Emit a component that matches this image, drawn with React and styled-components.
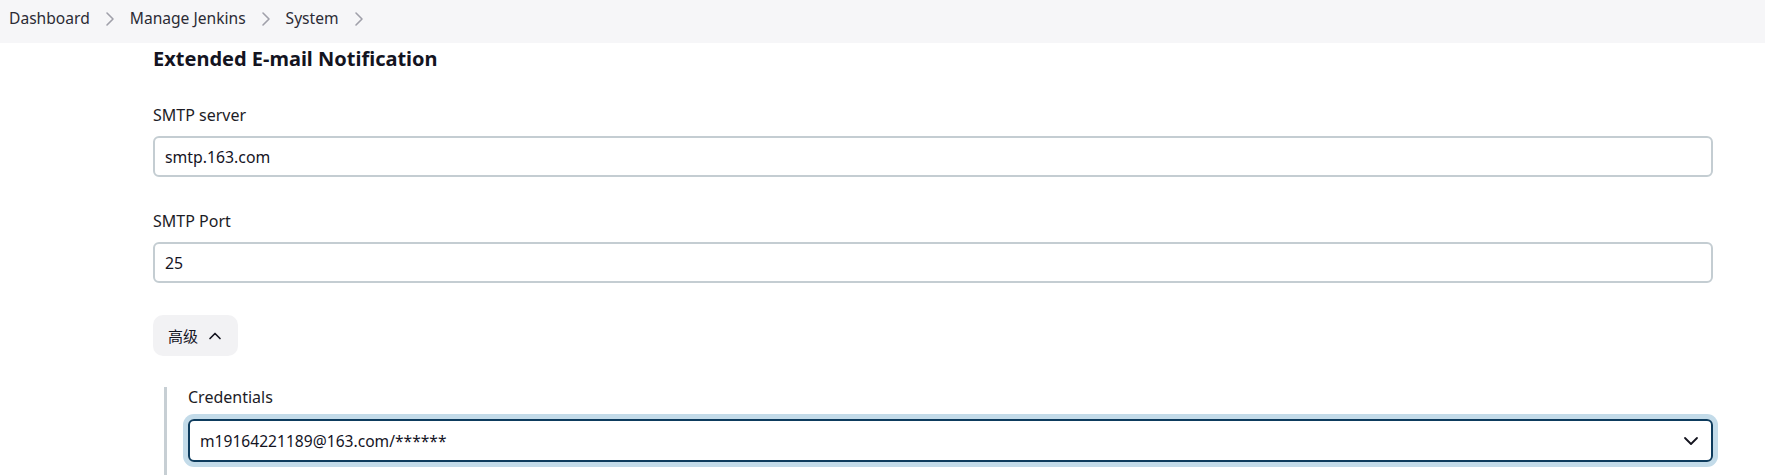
import React from 'react';
import styled, { createGlobalStyle } from 'styled-components';

const GlobalStyle = createGlobalStyle`
  html, body {
    margin: 0;
    padding: 0;
    background: #fff;
  }
  body {
    font-family: "Noto Sans", "Noto Sans CJK SC", sans-serif;
    color: #14141f;
  }
`

const Breadcrumbs = styled.nav`
  box-sizing: border-box;
  height: 43px;
  background: #f6f6f8;
  display: flex;
  align-items: center;
  padding: 0 0 8px 9px;
  font-size: 15.6px;
`

const Crumb = styled.span`
  color: #2b2b35;
  line-height: 20px;
`

const CrumbSep = styled.svg`
  width: 24px;
  height: 24px;
  margin: 2px 8px 0;
  color: #a0a0aa;
`

const Main = styled.main`
  padding: 0 52px 0 153px;
`

const Heading = styled.h2`
  margin: 4px 0 0;
  font-size: 20px;
  line-height: 24px;
  font-weight: 700;
`

const Field = styled.div`
  margin-top: ${p => p.$top}px;
`

const Label = styled.div`
  font-size: 16px;
  line-height: 20px;
  margin-bottom: ${p => p.$gap || 11}px;
  color: #1c1c26;
`

const TextInput = styled.div`
  box-sizing: border-box;
  height: 41px;
  border: 2px solid #c4cdd2;
  border-radius: 6px;
  padding: 0 10px;
  display: flex;
  align-items: center;
  font-size: 15.8px;
`

const AdvancedButton = styled.button`
  margin-top: 32px;
  height: 41px;
  box-sizing: border-box;
  border: none;
  border-radius: 10px;
  background: #f2f2f4;
  padding: 0 13px 0 15px;
  display: flex;
  align-items: center;
  gap: 7px;
  font-family: inherit;
  font-size: 15px;
  color: #14141f;
`

const Nested = styled.div`
  margin-top: 31px;
  margin-left: 11px;
  border-left: 3px solid #c7cfd4;
  padding-left: 21px;
  height: 88px;
`

const Select = styled.div`
  box-sizing: border-box;
  height: 43px;
  border: 2px solid #0d3b5d;
  border-radius: 6px;
  box-shadow: 0 0 0 5px #c3dbe9;
  padding: 0 8px 0 10px;
  display: flex;
  align-items: center;
  justify-content: space-between;
  font-size: 15.6px;
`

const Chevron = ({ d, size = 24, width = 2, color = 'currentColor' }) => (
  <svg width={size} height={size} viewBox="0 0 24 24" fill="none" stroke={color}
    strokeWidth={width} strokeLinecap="round" strokeLinejoin="round">
    <path d={d} />
  </svg>
)

const crumbs = ['Dashboard', 'Manage Jenkins', 'System'];

export default function App() {
  return (
    <>
      <GlobalStyle />
      <Breadcrumbs>
        {crumbs.map(c => (
          <React.Fragment key={c}>
            <Crumb>{c}</Crumb>
            <CrumbSep viewBox="0 0 24 24" fill="none" stroke="currentColor" strokeWidth="1.6"
              strokeLinecap="round" strokeLinejoin="round">
              <path d="m9 18 6-6-6-6" />
            </CrumbSep>
          </React.Fragment>
        ))}
      </Breadcrumbs>
      <Main>
        <Heading>Extended E-mail Notification</Heading>
        <Field $top={34}>
          <Label>SMTP server</Label>
          <TextInput>smtp.163.com</TextInput>
        </Field>
        <Field $top={34}>
          <Label>SMTP Port</Label>
          <TextInput>25</TextInput>
        </Field>
        <AdvancedButton>
          高级
          <Chevron d="m18 15-6-6-6 6" size={20} width={2} />
        </AdvancedButton>
        <Nested>
          <Label $gap={12}>Credentials</Label>
          <Select>
            m19164221189@163.com/******
            <Chevron d="m6 9 6 6 6-6" size={24} width={1.8} />
          </Select>
        </Nested>
      </Main>
    </>
  );
}
